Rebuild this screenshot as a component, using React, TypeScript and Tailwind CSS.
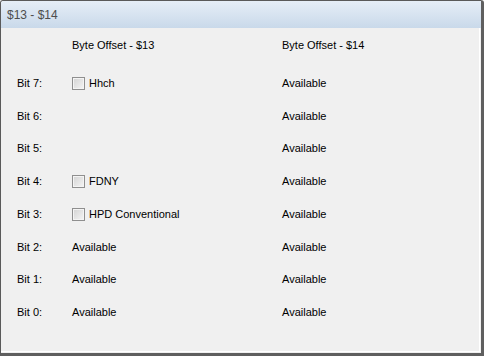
import React from "react";

const rows: { bit: string; left: { type: "check" | "text" | "none"; label?: string }; right: string }[] = [
  { bit: "Bit 7:", left: { type: "check", label: "Hhch" }, right: "Available" },
  { bit: "Bit 6:", left: { type: "none" }, right: "Available" },
  { bit: "Bit 5:", left: { type: "none" }, right: "Available" },
  { bit: "Bit 4:", left: { type: "check", label: "FDNY" }, right: "Available" },
  { bit: "Bit 3:", left: { type: "check", label: "HPD Conventional" }, right: "Available" },
  { bit: "Bit 2:", left: { type: "text", label: "Available" }, right: "Available" },
  { bit: "Bit 1:", left: { type: "text", label: "Available" }, right: "Available" },
  { bit: "Bit 0:", left: { type: "text", label: "Available" }, right: "Available" },
];

function Check() {
  return (
    <span className="inline-block w-[13px] h-[13px] border border-[#8f8f8f] mr-[4px] shrink-0 p-[1px] bg-[#f4f4f4]">
      <span className="block w-full h-full bg-gradient-to-br from-[#d6d6d6] to-[#f2f2f2]" />
    </span>
  );
}

export default function App() {
  return (
    <div
      className="w-[484px] h-[356px] bg-[#f0f0f0] border-l border-t border-[#5a5a5a] border-r-[3px] border-b-[3px] border-r-[#5f5f5f] border-b-[#5f5f5f] rounded-tl-[3px] rounded-tr-[3px] flex flex-col text-[11px] text-black overflow-hidden"
      style={{ fontFamily: '"Liberation Sans", Arial, sans-serif' }}
    >
      <div className="h-[27px] shrink-0 bg-gradient-to-b from-[#e6eef7] to-[#c9d9ea] flex items-center pl-[6px] text-[12px] text-[#4d4d4d]">
        $13 - $14
      </div>
      <div className="flex-1 flex flex-col border-r border-b border-[#ffffff] mr-[1px] mb-[1px]">
        <div className="h-[34px] flex items-center shrink-0">
          <div className="w-[71px]" />
          <div className="w-[210px]">Byte Offset - $13</div>
          <div>Byte Offset - $14</div>
        </div>
        <div className="h-[5px] shrink-0" />
        {rows.map((r) => (
          <div key={r.bit} className="h-[32.7px] flex items-center shrink-0">
            <div className="w-[71px] pl-[16px]">{r.bit}</div>
            <div className="w-[210px] flex items-center">
              {r.left.type === "check" && (
                <>
                  <Check />
                  <span>{r.left.label}</span>
                </>
              )}
              {r.left.type === "text" && <span>{r.left.label}</span>}
            </div>
            <div>{r.right}</div>
          </div>
        ))}
      </div>
    </div>
  );
}
